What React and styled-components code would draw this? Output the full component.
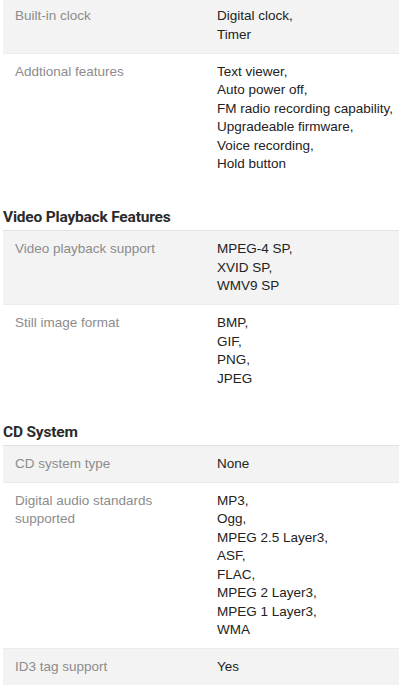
import React from 'react';
import styled, { createGlobalStyle } from 'styled-components';

const GlobalStyle = createGlobalStyle`
  html, body {
    margin: 0;
    padding: 0;
    background: #fff;
  }
  body {
    font-family: "Liberation Sans", Arial, sans-serif;
    overflow: hidden;
  }
`;

const Page = styled.div`
  margin-top: -2px;
  padding-left: 3px;
  overflow: hidden;
`;

const Section = styled.section`
  margin-bottom: 26px;
`;

const SectionTitle = styled.h3`
  margin: 0 0 4px;
  font-family: Roboto, "Liberation Sans", sans-serif;
  font-size: 15.5px;
  font-weight: 700;
  letter-spacing: -0.2px;
  color: #2b2b2b;
  line-height: 18px;
`;

const Table = styled.div`
  border-top: ${({ $top }) => ($top ? '1px solid #e2e2e2' : 'none')};
`;

const Row = styled.div`
  display: grid;
  grid-template-columns: 202px 1fr;
  background: ${({ $shaded }) => ($shaded ? '#f3f3f3' : '#fff')};
  border-top: 1px solid #ececec;
  &:first-child {
    border-top: none;
  }
`;

const Label = styled.div`
  padding: 9px 12px 8.5px;
  font-size: 13.5px;
  line-height: 18.5px;
  color: #8c8c8c;
`;

const Value = styled.div`
  padding: 9px 0 8.5px 12px;
  font-size: 13.5px;
  line-height: 18.5px;
  color: #222;
  white-space: nowrap;
`;

const sections = [
  {
    rows: [
      { label: 'Built-in clock', values: ['Digital clock,', 'Timer'] },
      {
        label: 'Addtional features',
        values: [
          'Text viewer,',
          'Auto power off,',
          'FM radio recording capability,',
          'Upgradeable firmware,',
          'Voice recording,',
          'Hold button',
        ],
      },
    ],
  },
  {
    title: 'Video Playback Features',
    rows: [
      { label: 'Video playback support', values: ['MPEG-4 SP,', 'XVID SP,', 'WMV9 SP'] },
      { label: 'Still image format', values: ['BMP,', 'GIF,', 'PNG,', 'JPEG'] },
    ],
  },
  {
    title: 'CD System',
    rows: [
      { label: 'CD system type', values: ['None'] },
      {
        label: 'Digital audio standards supported',
        values: [
          'MP3,',
          'Ogg,',
          'MPEG 2.5 Layer3,',
          'ASF,',
          'FLAC,',
          'MPEG 2 Layer3,',
          'MPEG 1 Layer3,',
          'WMA',
        ],
      },
      { label: 'ID3 tag support', values: ['Yes'] },
    ],
  },
];

const App = () => {
  return (
    <Page>
      <GlobalStyle />
      {sections.map((section, si) => (
        <Section key={si}>
          {section.title && <SectionTitle>{section.title}</SectionTitle>}
          <Table $top={!!section.title}>
            {section.rows.map((row, ri) => (
              <Row key={row.label} $shaded={ri % 2 === 0}>
                <Label>{row.label}</Label>
                <Value>
                  {row.values.map((v) => (
                    <div key={v}>{v}</div>
                  ))}
                </Value>
              </Row>
            ))}
          </Table>
        </Section>
      ))}
    </Page>
  );
};

export default App;
